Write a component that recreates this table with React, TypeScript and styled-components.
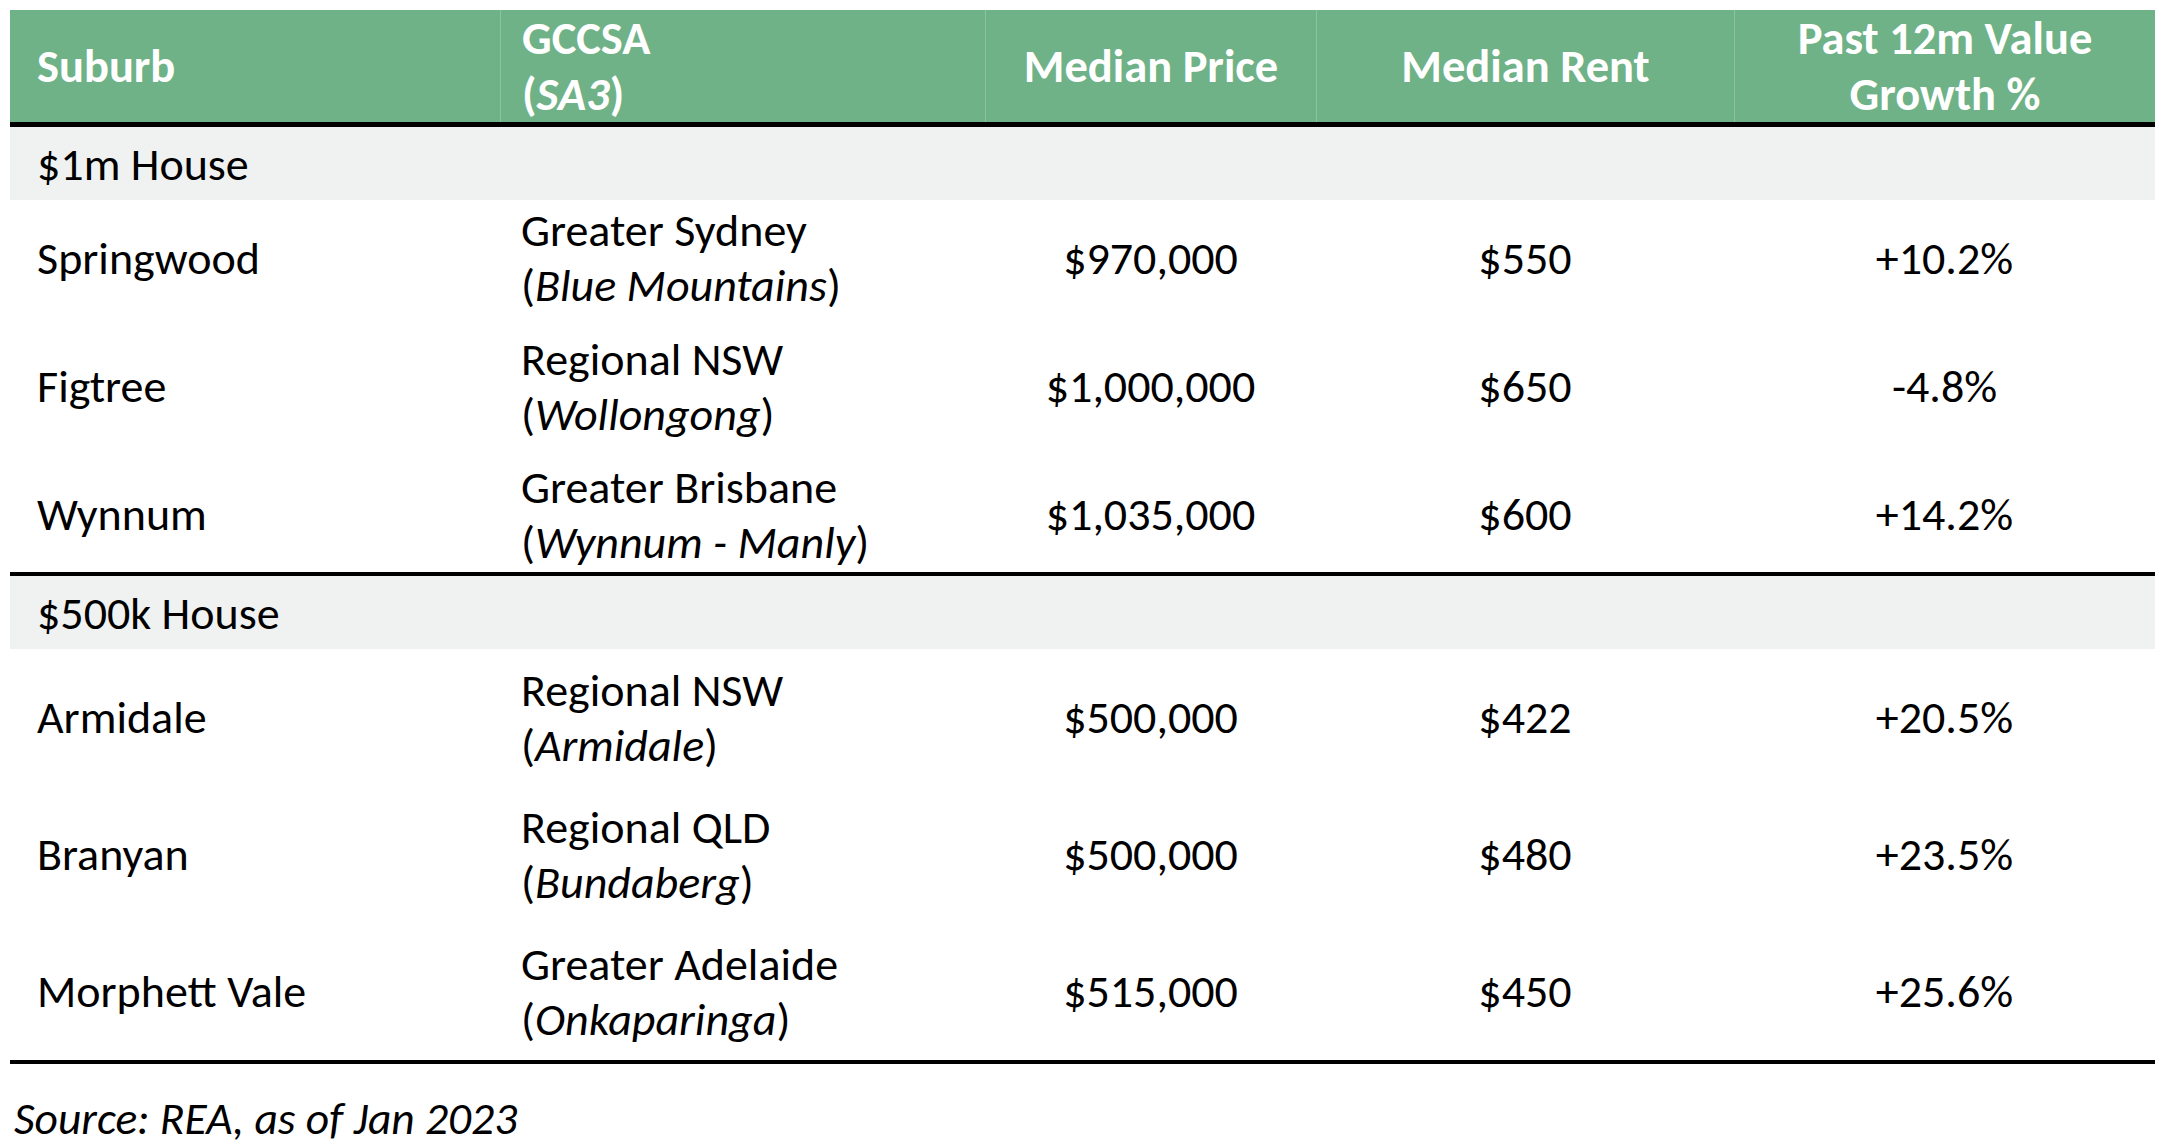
import React from "react";
import styled, { createGlobalStyle } from "styled-components";

const GlobalStyle = createGlobalStyle`
  html, body { margin: 0; padding: 0; background: #ffffff; }
  body { font-family: Carlito, Calibri, Lato, "Liberation Sans", sans-serif; color: #000; }
`;

const COLS = "490px 485px 331px 418px 421px";

const Page = styled.div`
  padding: 10px 11px 0 10px;
  width: 2145px;
`;

const Table = styled.div`
  width: 2145px;
  display: flex;
  flex-direction: column;
`;

const HeaderRow = styled.div`
  display: grid;
  grid-template-columns: ${COLS};
  height: 112px;
  background: #6fb287;
  border-bottom: 5px solid #000;
`;

const HeaderCell = styled.div<{ $align?: "left" | "center"; $pad?: number; $first?: boolean }>`
  display: flex;
  flex-direction: column;
  justify-content: center;
  align-items: ${(p) => (p.$align === "center" ? "center" : "flex-start")};
  text-align: ${(p) => p.$align ?? "left"};
  padding-left: ${(p) => p.$pad ?? 0}px;
  border-left: ${(p) => (p.$first ? "none" : "1px solid rgba(255,255,255,0.22)")};
  color: #ffffff;
  font-weight: 700;
  font-size: 46.5px;
  line-height: 56px;
  white-space: nowrap;
`;

const Group = styled.div`
  display: flex;
  flex-direction: column;
  border-bottom: 4px solid #000;
`;

const SectionRow = styled.div`
  height: 73px;
  background: #f0f2f1;
  display: flex;
  align-items: center;
  padding-left: 27px;
  font-size: 46px;
`;

const DataRow = styled.div<{ $h: number }>`
  display: grid;
  grid-template-columns: ${COLS};
  height: ${(p) => p.$h}px;
`;

const Cell = styled.div<{ $align?: "left" | "center"; $pad?: number }>`
  display: flex;
  flex-direction: column;
  justify-content: center;
  align-items: ${(p) => (p.$align === "center" ? "center" : "flex-start")};
  padding-left: ${(p) => p.$pad ?? 0}px;
  font-size: 46px;
  line-height: 55px;
  white-space: nowrap;
`;

const Em = styled.span`
  font-style: italic;
`;

const Source = styled.div`
  margin-top: 27px;
  padding-left: 4px;
  font-size: 45.5px;
  line-height: 55px;
  font-style: italic;
`;

type Row = { suburb: string; region: string; sa3: string; price: string; rent: string; growth: string; h: number };

const groups: { title: string; rows: Row[] }[] = [
  {
    title: "$1m House",
    rows: [
      { suburb: "Springwood", region: "Greater Sydney", sa3: "Blue Mountains", price: "$970,000", rent: "$550", growth: "+10.2%", h: 116 },
      { suburb: "Figtree", region: "Regional NSW", sa3: "Wollongong", price: "$1,000,000", rent: "$650", growth: "-4.8%", h: 141 },
      { suburb: "Wynnum", region: "Greater Brisbane", sa3: "Wynnum - Manly", price: "$1,035,000", rent: "$600", growth: "+14.2%", h: 115 },
    ],
  },
  {
    title: "$500k House",
    rows: [
      { suburb: "Armidale", region: "Regional NSW", sa3: "Armidale", price: "$500,000", rent: "$422", growth: "+20.5%", h: 137 },
      { suburb: "Branyan", region: "Regional QLD", sa3: "Bundaberg", price: "$500,000", rent: "$480", growth: "+23.5%", h: 137 },
      { suburb: "Morphett Vale", region: "Greater Adelaide", sa3: "Onkaparinga", price: "$515,000", rent: "$450", growth: "+25.6%", h: 137 },
    ],
  },
];

export default function App() {
  return (
    <>
      <GlobalStyle />
      <Page>
        <Table>
          <HeaderRow>
            <HeaderCell $first $pad={27}>Suburb</HeaderCell>
            <HeaderCell $pad={21}>
              <span>GCCSA</span>
              <span>
                (<Em>SA3</Em>)
              </span>
            </HeaderCell>
            <HeaderCell $align="center">Median Price</HeaderCell>
            <HeaderCell $align="center">Median Rent</HeaderCell>
            <HeaderCell $align="center">
              <span>Past 12m Value</span>
              <span>Growth %</span>
            </HeaderCell>
          </HeaderRow>
          {groups.map((g) => (
            <Group key={g.title}>
              <SectionRow>{g.title}</SectionRow>
              {g.rows.map((r) => (
                <DataRow key={r.suburb} $h={r.h}>
                  <Cell $pad={27}>{r.suburb}</Cell>
                  <Cell $pad={21}>
                    <span>{r.region}</span>
                    <span>
                      (<Em>{r.sa3}</Em>)
                    </span>
                  </Cell>
                  <Cell $align="center">{r.price}</Cell>
                  <Cell $align="center">{r.rent}</Cell>
                  <Cell $align="center">{r.growth}</Cell>
                </DataRow>
              ))}
            </Group>
          ))}
        </Table>
        <Source>Source: REA, as of Jan 2023</Source>
      </Page>
    </>
  );
}
